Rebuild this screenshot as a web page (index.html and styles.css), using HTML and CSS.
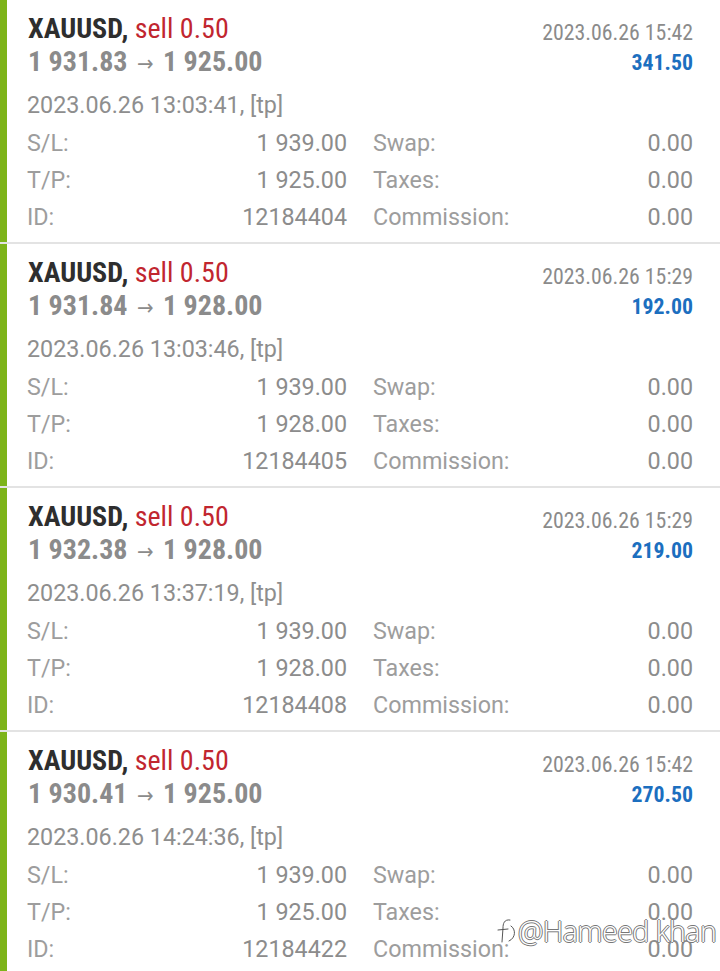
FILE: index.html
```html
<!DOCTYPE html>
<html>
<head>
<meta charset="utf-8">
<link rel="stylesheet" href="styles.css">
</head>
<body>
<div class="list">
  <div class="card">
    <div class="bar"></div>
    <div class="content">
      <div class="head">
        <div class="head-left">
          <div class="title"><span class="sym">XAUUSD,</span> <span class="side">sell 0.50</span></div>
          <div class="prices">1 931.83 <span class="arrow">→</span> 1 925.00</div>
        </div>
        <div class="head-right">
          <div class="close-time">2023.06.26 15:42</div>
          <div class="profit">341.50</div>
        </div>
      </div>
      <div class="open-time">2023.06.26 13:03:41, [tp]</div>
      <div class="grid">
        <span class="lbl">S/L:</span><span class="val">1 939.00</span><span class="lbl lbl2">Swap:</span><span class="val">0.00</span>
        <span class="lbl">T/P:</span><span class="val">1 925.00</span><span class="lbl lbl2">Taxes:</span><span class="val">0.00</span>
        <span class="lbl">ID:</span><span class="val">12184404</span><span class="lbl lbl2">Commission:</span><span class="val">0.00</span>
      </div>
    </div>
  </div>
  <div class="card">
    <div class="bar"></div>
    <div class="content">
      <div class="head">
        <div class="head-left">
          <div class="title"><span class="sym">XAUUSD,</span> <span class="side">sell 0.50</span></div>
          <div class="prices">1 931.84 <span class="arrow">→</span> 1 928.00</div>
        </div>
        <div class="head-right">
          <div class="close-time">2023.06.26 15:29</div>
          <div class="profit">192.00</div>
        </div>
      </div>
      <div class="open-time">2023.06.26 13:03:46, [tp]</div>
      <div class="grid">
        <span class="lbl">S/L:</span><span class="val">1 939.00</span><span class="lbl lbl2">Swap:</span><span class="val">0.00</span>
        <span class="lbl">T/P:</span><span class="val">1 928.00</span><span class="lbl lbl2">Taxes:</span><span class="val">0.00</span>
        <span class="lbl">ID:</span><span class="val">12184405</span><span class="lbl lbl2">Commission:</span><span class="val">0.00</span>
      </div>
    </div>
  </div>
  <div class="card">
    <div class="bar"></div>
    <div class="content">
      <div class="head">
        <div class="head-left">
          <div class="title"><span class="sym">XAUUSD,</span> <span class="side">sell 0.50</span></div>
          <div class="prices">1 932.38 <span class="arrow">→</span> 1 928.00</div>
        </div>
        <div class="head-right">
          <div class="close-time">2023.06.26 15:29</div>
          <div class="profit">219.00</div>
        </div>
      </div>
      <div class="open-time">2023.06.26 13:37:19, [tp]</div>
      <div class="grid">
        <span class="lbl">S/L:</span><span class="val">1 939.00</span><span class="lbl lbl2">Swap:</span><span class="val">0.00</span>
        <span class="lbl">T/P:</span><span class="val">1 928.00</span><span class="lbl lbl2">Taxes:</span><span class="val">0.00</span>
        <span class="lbl">ID:</span><span class="val">12184408</span><span class="lbl lbl2">Commission:</span><span class="val">0.00</span>
      </div>
    </div>
  </div>
  <div class="card">
    <div class="bar"></div>
    <div class="content">
      <div class="head">
        <div class="head-left">
          <div class="title"><span class="sym">XAUUSD,</span> <span class="side">sell 0.50</span></div>
          <div class="prices">1 930.41 <span class="arrow">→</span> 1 925.00</div>
        </div>
        <div class="head-right">
          <div class="close-time">2023.06.26 15:42</div>
          <div class="profit">270.50</div>
        </div>
      </div>
      <div class="open-time">2023.06.26 14:24:36, [tp]</div>
      <div class="grid">
        <span class="lbl">S/L:</span><span class="val">1 939.00</span><span class="lbl lbl2">Swap:</span><span class="val">0.00</span>
        <span class="lbl">T/P:</span><span class="val">1 925.00</span><span class="lbl lbl2">Taxes:</span><span class="val">0.00</span>
        <span class="lbl">ID:</span><span class="val">12184422</span><span class="lbl lbl2">Commission:</span><span class="val">0.00</span>
      </div>
    </div>
  </div>
</div>
<div class="watermark">
  <svg class="wm-icon" width="22" height="30" viewBox="0 0 22 30"><g fill="none" stroke-linecap="round"><path d="M15 4 C9 3 8 8 8 12 L7 26 M3 14 L13 13 M16 10 C21 13 21 22 14 25" stroke="#fff" stroke-width="3.5"/><path d="M15 4 C9 3 8 8 8 12 L7 26 M3 14 L13 13 M16 10 C21 13 21 22 14 25" stroke="#555" stroke-width="1"/></g></svg>
  <span class="wm-text">@Hameed khan</span>
</div>
</body>
</html>
```
FILE: styles.css
```css
html, body {
  margin: 0;
  padding: 0;
  background: #ffffff;
  overflow: hidden;
}
body {
  width: 720px;
  height: 971px;
  position: relative;
  font-family: Roboto, "Liberation Sans", sans-serif;
}
.list {
  display: flex;
  flex-direction: column;
}
.card {
  display: flex;
  height: 242px;
  border-bottom: 2px solid #e3e3e3;
}
.bar {
  width: 7px;
  flex: none;
  background: #7db41a;
}
.content {
  flex: 1;
  padding: 12px 27px 0 20px;
}
.head {
  display: flex;
  justify-content: space-between;
  align-items: flex-start;
}
.head-left {
  font-family: "Roboto Condensed", "Liberation Sans Narrow", "DejaVu Sans Condensed", sans-serif;
  font-size: 28px;
  line-height: 33px;
  padding-left: 1px;
}
.title .sym {
  font-weight: 700;
  color: #2e2e2e;
}
.title .side {
  color: #c1262f;
}
.prices {
  font-weight: 700;
  color: #8b8b8b;
}
.prices .arrow {
  font-size: 22px;
  font-weight: 400;
  padding: 0 3px;
}
.head-right {
  padding-top: 6px;
  display: flex;
  flex-direction: column;
  align-items: flex-end;
  font-family: "Roboto Condensed", "Liberation Sans Narrow", "DejaVu Sans Condensed", sans-serif;
  font-size: 21.8px;
  line-height: 30px;
}
.close-time {
  color: #8b8b8b;
}
.profit {
  color: #1c6fbf;
  font-weight: 700;
}
.open-time {
  margin-top: 6px;
  font-size: 23.3px;
  line-height: 39px;
  color: #8e8e8e;
}
.grid {
  display: grid;
  grid-template-columns: 100px 220px 186px 160px;
  font-size: 23.3px;
  line-height: 37px;
}
.grid .lbl {
  color: #9d9d9d;
}
.grid .lbl2 {
  padding-left: 26px;
}
.grid .val {
  color: #8c8c8c;
  text-align: right;
}
.watermark {
  position: absolute;
  left: 495px;
  top: 912px;
  display: flex;
  align-items: center;
  gap: 1px;
}
.wm-text {
  font-family: "Open Sans", sans-serif;
  font-weight: 300;
  font-size: 28.5px;
  color: #ffffff;
  text-shadow: -1px 0 #777, 1px 0 #777, 0 -1px #777, 0 1px #777;
  letter-spacing: -0.5px;
}
```
